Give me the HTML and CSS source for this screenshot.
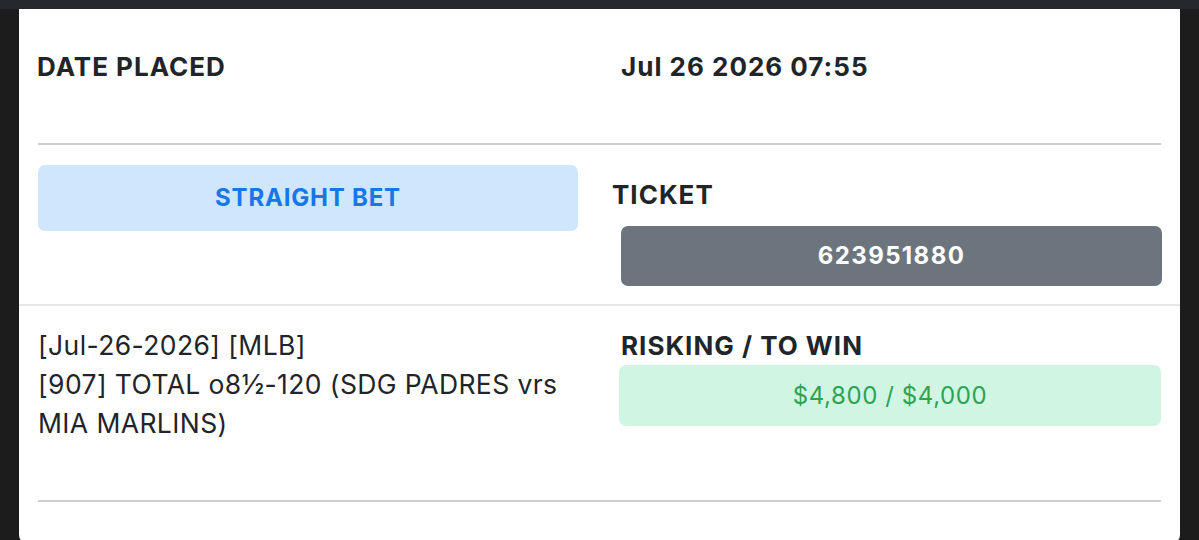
FILE: index.html
```html
<!DOCTYPE html>
<html lang="en">
<head>
    <meta charset="UTF-8">
    <meta name="viewport" content="width=device-width, initial-scale=1.0">
    <title>Ticket</title>
    <link rel="stylesheet" href="styles.css">
</head>
<body>

    <div class="top-bar"></div>

    <div class="card">
        <div class="section placed-row">
            <div class="label">DATE PLACED</div>
            <div class="label">Jul 26 2026 07:55</div>
        </div>

        <div class="section type-row">
            <div class="col">
                <div class="pill pill-blue">STRAIGHT BET</div>
            </div>
            <div class="col col-ticket">
                <div class="label ticket-label">TICKET</div>
                <div class="pill pill-gray">623951880</div>
            </div>
        </div>

        <div class="section detail-row">
            <div class="col description">
                [Jul-26-2026] [MLB]<br>
                [907] TOTAL o8½-120 (SDG PADRES vrs MIA MARLINS)
            </div>
            <div class="col col-risk">
                <div class="label">RISKING / TO WIN</div>
                <div class="pill pill-green">$4,800 / $4,000</div>
            </div>
        </div>
    </div>

</body>
</html>
```

FILE: styles.css
```css
body {
    margin: 0;
    background: #1c1c1c;
    font-family: Inter, "Noto Sans", sans-serif;
    color: #212529;
    height: 540px;
    overflow: hidden;
}

.top-bar {
    height: 9px;
    background: #25292d;
}

.card {
    background: #fff;
    margin: 0 19px 0 19px;
    height: 534px;
    border-radius: 0 0 8px 8px;
}

.section {
    display: grid;
    grid-template-columns: 540px 541px;
    column-gap: 43px;
    margin: 0 19px;
}

.label {
    font-size: 26px;
    font-weight: 700;
    line-height: 29px;
    letter-spacing: 1px;
}

.placed-row {
    padding: 43px 0 62px 0;
    border-bottom: 2px solid #cfcfcf;
}

.placed-row .label:first-child {
    margin-left: -1px;
}

.type-row {
    margin: 0;
    padding: 20px 19px 18px 19px;
    border-bottom: 2px solid #e6e6e6;
    align-items: start;
}

.col-ticket {
    padding-top: 15px;
}

.ticket-label {
    margin-left: -9px;
    margin-bottom: 17px;
}

.pill {
    border-radius: 7px;
    text-align: center;
    font-size: 24px;
    letter-spacing: 0.8px;
}

.pill-blue {
    background: #cfe6fc;
    color: #1677e8;
    font-weight: 700;
    height: 66px;
    line-height: 66px;
}

.pill-gray {
    background: #6c757d;
    color: #fff;
    font-weight: 700;
    height: 60px;
    line-height: 60px;
    letter-spacing: 1.4px;
}

.detail-row {
    padding: 20px 0 57px 0;
    border-bottom: 2px solid #cfcfcf;
    align-items: start;
}

.description {
    font-size: 26.5px;
    line-height: 39px;
    letter-spacing: 0.4px;
}

.col-risk {
    padding-top: 5px;
}

.col-risk .label {
    margin-bottom: 5px;
}

.pill-green {
    background: #d1f5e3;
    color: #2ba44e;
    height: 61px;
    line-height: 61px;
    letter-spacing: 0.6px;
    margin-left: -2px;
    margin-right: 1px;
}
```
